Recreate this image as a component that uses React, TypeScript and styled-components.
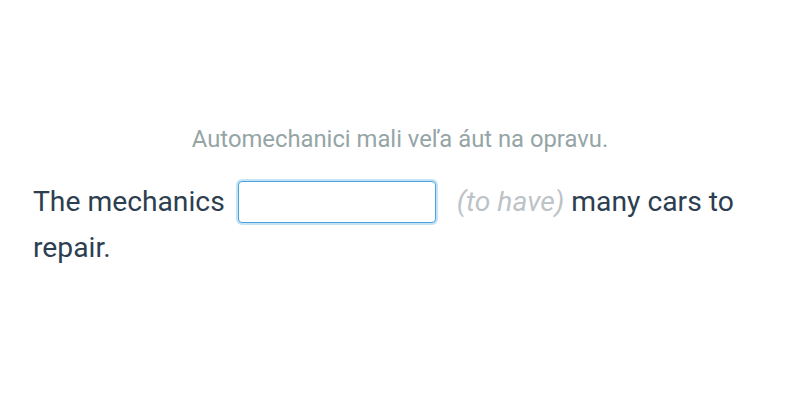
import React from "react";
import styled, { createGlobalStyle } from "styled-components";

const Global = createGlobalStyle`
  html, body { margin: 0; padding: 0; background: #ffffff; }
  body { font-family: Roboto, "Noto Sans", sans-serif; }
`;

const Page = styled.div`
  width: 800px;
  height: 400px;
  box-sizing: border-box;
  padding: 123px 33px 0 33px;
`;

const Translation = styled.div`
  text-align: center;
  font-size: 23.8px;
  line-height: 32px;
  color: #95a5a6;
  margin-bottom: 24px;
`;

const Sentence = styled.div`
  font-size: 28.25px;
  line-height: 46px;
  color: #2c3e50;
`;

const Blank = styled.input`
  box-sizing: border-box;
  width: 198px;
  height: 42px;
  margin: 0 0 0 13px;
  vertical-align: middle;
  border: 1px solid #4aa3df;
  border-radius: 4px;
  box-shadow: 0 0 0 2px rgba(93, 173, 226, 0.35);
  outline: none;
  font-family: inherit;
  font-size: 24px;
  padding: 0 10px;
  background: #fff;
  position: relative;
  top: -2px;
`;

const Hint = styled.span`
  font-style: italic;
  color: #bdc3c7;
  margin-left: 21px;
`;

export default function App() {
  return (
    <>
      <Global />
      <Page>
        <Translation>Automechanici mali veľa áut na opravu.</Translation>
        <Sentence>
          The mechanics<Blank type="text" aria-label="answer" />
          <Hint>(to have)</Hint> many cars to repair.
        </Sentence>
      </Page>
    </>
  );
}
